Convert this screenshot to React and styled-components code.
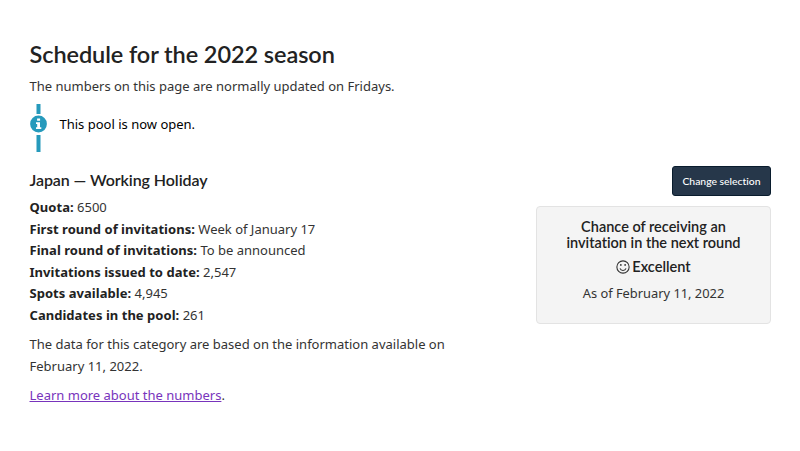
import React from 'react'
import styled, { createGlobalStyle } from 'styled-components'

const GlobalStyle = createGlobalStyle`
  body {
    margin: 0;
    background: #fff;
    color: #333;
    font-family: 'Noto Sans', sans-serif;
    font-size: 13px;
    line-height: 21.5px;
    font-variant-ligatures: none;
  }
`

const Page = styled.main`
  box-sizing: border-box;
  width: 800px;
  height: 451px;
  padding: 39px 29px 0 29.5px;
  overflow: hidden;
`

const Title = styled.h1`
  margin: 0 0 7px;
  color: #222;
  font: 600 23.5px/30px Lato, sans-serif;
  font-variant-ligatures: none;
  letter-spacing: -0.08px;
`

const Text = styled.p`
  margin: 0 0 ${p => p.$gap || 0}px;
  white-space: nowrap;
`

const Alert = styled.div`
  display: flex;
  align-items: flex-start;
  height: 48px;
  margin-top: 6.5px;
  gap: 12px;
  color: #000;

  p {
    padding-top: 10px;
  }
`

const AlertMark = styled.svg`
  width: 18px;
  height: 48px;
`

const Columns = styled.div`
  display: flex;
  justify-content: space-between;
  padding-top: 13.9px;
`

const Details = styled.section`
  width: 440px;
`

const Subtitle = styled.h2`
  margin: 4px 0 7.6px;
  color: #222;
  font: 600 16px/20px Lato, sans-serif;
  font-variant-ligatures: none;
  letter-spacing: -0.08px;
`

const Facts = styled.ul`
  list-style: none;
  margin: 0 0 8px;
  padding: 0;

  b {
    color: #222;
    letter-spacing: 0.035px;
  }
`

const Link = styled.a`
  color: #7834bc;
  text-decoration: underline;
`

const Side = styled.aside`
  display: flex;
  flex-direction: column;
  align-items: flex-end;
`

const Button = styled.button`
  width: 99px;
  height: 30px;
  margin: 0 0 10px;
  padding: 1px 0 0;
  border: 1px solid #091c2d;
  border-radius: 3px;
  background: #26374a;
  color: #fff;
  font: 500 10.4px/16px Lato, sans-serif;
  font-variant-ligatures: none;
`

const Well = styled.div`
  box-sizing: border-box;
  width: 235px;
  height: 118px;
  padding-top: 12px;
  border: 1px solid #e3e3e3;
  border-radius: 4px;
  background: #f4f4f4;
  text-align: center;

  p {
    font-size: 12.85px;
  }
`

const WellTitle = styled.h3`
  margin: 0 0 8px;
  color: #222;
  font: 600 14.5px/16px Lato, sans-serif;
  font-variant-ligatures: none;
`

const Rating = styled.div`
  display: flex;
  align-items: center;
  justify-content: center;
  gap: 2px;
  margin-bottom: 8px;
  color: #222;
  font: 600 14.6px/16px Lato, sans-serif;
`

const facts = [
  ['Quota', '6500'],
  ['First round of invitations', 'Week of January 17'],
  ['Final round of invitations', 'To be announced'],
  ['Invitations issued to date', '2,547'],
  ['Spots available', '4,945'],
  ['Candidates in the pool', '261']
]

const InfoMark = () => (
  <AlertMark viewBox="0 0 18 48">
    <path d="M6.5 0h4v10h-4zM6.5 31h4v17h-4z" fill="#269abc" />
    <circle cx="8.5" cy="20" r="8.4" fill="#269abc" />
    <path d="M7.1 14.5h3v2.3h-3zM6 18.2h4v5h1.3V25H6v-1.8h1.2V20H6z" fill="#fff" />
  </AlertMark>
)

const Smile = () => (
  <svg width="14" height="14" viewBox="0 0 13 13" fill="none" stroke="#333">
    <circle cx="6.5" cy="6.5" r="5.7" strokeWidth="1" />
    <path d="M3.7 7.8c.8 2.5 4.8 2.5 5.6 0" strokeWidth="1" />
    <circle cx="4.5" cy="4.6" r=".85" fill="#333" stroke="none" />
    <circle cx="8.5" cy="4.6" r=".85" fill="#333" stroke="none" />
  </svg>
)

const App = () => (
  <Page>
    <GlobalStyle />
    <Title>Schedule for the 2022 season</Title>
    <Text>The numbers on this page are normally updated on Fridays.</Text>
    <Alert>
      <InfoMark />
      <Text>This pool is now open.</Text>
    </Alert>
    <Columns>
      <Details>
        <Subtitle>Japan — Working Holiday</Subtitle>
        <Facts>
          {facts.map(([label, value]) => (
            <li key={label}><b>{label}:</b> {value}</li>
          ))}
        </Facts>
        <Text $gap={8}>
          The data for this category are based on the information available on<br />
          February 11, 2022.
        </Text>
        <Text><Link href="#">Learn more about the numbers</Link>.</Text>
      </Details>
      <Side>
        <Button>Change selection</Button>
        <Well>
          <WellTitle>Chance of receiving an<br />invitation in the next round</WellTitle>
          <Rating><Smile />Excellent</Rating>
          <Text>As of February 11, 2022</Text>
        </Well>
      </Side>
    </Columns>
  </Page>
)

export default App
